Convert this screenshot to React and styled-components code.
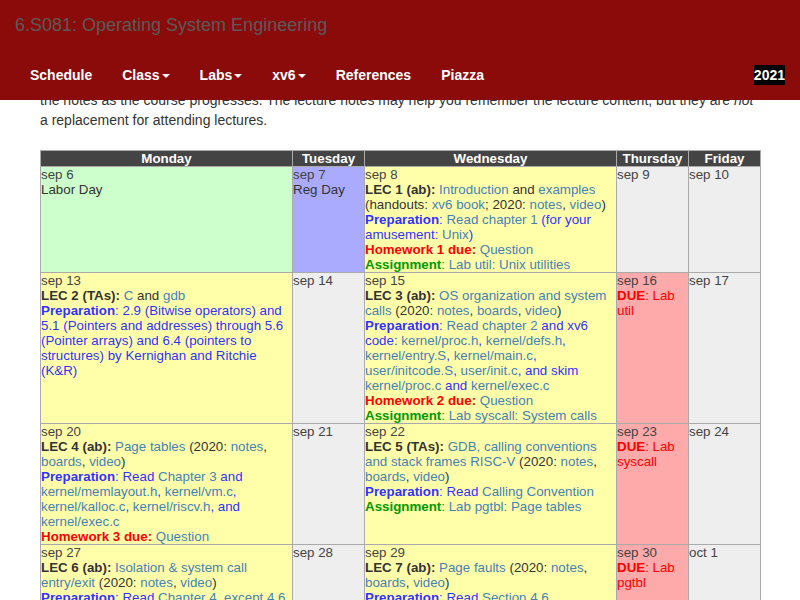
import React from 'react';
import styled, { createGlobalStyle } from 'styled-components';

const GlobalStyle = createGlobalStyle`
  html, body {
    margin: 0;
    padding: 0;
  }
  body {
    font-family: "Liberation Sans", Arial, Helvetica, sans-serif;
    font-size: 14px;
    line-height: 20px;
    color: #333;
    background: #fff;
  }
`;

const Navbar = styled.header`
  position: fixed;
  top: 0;
  left: 0;
  right: 0;
  z-index: 10;
  height: 100px;
  background: #8b0a0a;
`;

const Brand = styled.div`
  height: 50px;
  padding: 0 15px;
  font-size: 18px;
  line-height: 50px;
  color: #5a5a5a;
`;

const NavRow = styled.nav`
  display: flex;
  align-items: center;
  justify-content: space-between;
  height: 50px;
  padding: 0 15px;
`;

const NavList = styled.ul`
  display: flex;
  list-style: none;
  margin: 0;
  padding: 0;
`;

const NavItem = styled.li`
  padding: 15px;
  font-weight: bold;
  color: #fff;
  line-height: 20px;
`;

const Caret = styled.span`
  display: inline-block;
  width: 0;
  height: 0;
  margin-left: 2px;
  vertical-align: middle;
  border-top: 4px solid #fff;
  border-left: 4px solid transparent;
  border-right: 4px solid transparent;
`;

const Year = styled.span`
  background: #000;
  color: #fff;
  font-weight: bold;
  line-height: 20px;
`;

const Main = styled.main`
  padding: 90px 40px 40px;
`;

const Intro = styled.p`
  margin: 0 0 20px;
`;

const Schedule = styled.table`
  width: 720px;
  table-layout: fixed;
  border-collapse: collapse;
  font-size: 13.33px;
  line-height: 15px;
`;

const Col = styled.col`
  width: ${(p) => p.$w}px;
`;

const DayHead = styled.th`
  background: #444;
  color: #fff;
  font-weight: bold;
  border: 1px solid #aaa;
  padding: 0;
  text-align: center;
`;

const Day = styled.td`
  background: ${(p) => p.$bg || '#eee'};
  border: 1px solid #aaa;
  padding: 0;
  vertical-align: top;
  color: #333;
`;

const Date = styled.div`
  color: #444;
`;

const Line = styled.div``;

const Lec = styled.b`
  color: #333;
`;

const A = styled.a`
  color: #4682b4;
  text-decoration: none;
`;

const Prep = styled.div`
  color: #33f;
  b {
    color: #33f;
  }
`;

const Hw = styled.b`
  color: #f00;
`;

const Assign = styled.div`
  color: #090;
  b {
    color: #090;
  }
`;

const Due = styled.div`
  color: #f00;
`;

const colors = {
  holiday: '#ccffcc',
  reg: '#aaaaff',
  lec: '#ffffaa',
  none: '#eeeeee',
  due: '#ffaaaa',
};

const Empty = ({ date }) => (
  <Day $bg={colors.none}>
    <Date>{date}</Date>
  </Day>
);

const DueDay = ({ date, lab }) => (
  <Day $bg={colors.due}>
    <Date>{date}</Date>
    <Due>
      <b>DUE</b>: Lab {lab}
    </Due>
  </Day>
);

const App = () => {
  return (
    <>
      <GlobalStyle />
      <Navbar>
        <Brand>6.S081: Operating System Engineering</Brand>
        <NavRow>
          <NavList>
            <NavItem>Schedule</NavItem>
            <NavItem>
              Class<Caret />
            </NavItem>
            <NavItem>
              Labs<Caret />
            </NavItem>
            <NavItem>
              xv6<Caret />
            </NavItem>
            <NavItem>References</NavItem>
            <NavItem>Piazza</NavItem>
          </NavList>
          <Year>2021</Year>
        </NavRow>
      </Navbar>
      <Main>
        <Intro>
          the notes as the course progresses. The lecture notes may help you remember the
          lecture content, but they are <i>not</i> a replacement for attending lectures.
        </Intro>
        <Schedule>
          <colgroup>
            <Col $w={252} />
            <Col $w={72} />
            <Col $w={252} />
            <Col $w={72} />
            <Col $w={72} />
          </colgroup>
          <thead>
            <tr>
              <DayHead>Monday</DayHead>
              <DayHead>Tuesday</DayHead>
              <DayHead>Wednesday</DayHead>
              <DayHead>Thursday</DayHead>
              <DayHead>Friday</DayHead>
            </tr>
          </thead>
          <tbody>
            <tr>
              <Day $bg={colors.holiday}>
                <Date>sep 6</Date>
                <Line>Labor Day</Line>
              </Day>
              <Day $bg={colors.reg}>
                <Date>sep 7</Date>
                <Line>Reg Day</Line>
              </Day>
              <Day $bg={colors.lec}>
                <Date>sep 8</Date>
                <Line>
                  <Lec>LEC 1 (ab):</Lec> <A>Introduction</A> and <A>examples</A> (handouts:{' '}
                  <A>xv6 book</A>; 2020: <A>notes</A>, <A>video</A>)
                </Line>
                <Prep>
                  <b>Preparation</b>: <A>Read chapter 1</A> (for your amusement: <A>Unix</A>)
                </Prep>
                <Line>
                  <Hw>Homework 1 due:</Hw> <A>Question</A>
                </Line>
                <Assign>
                  <b>Assignment</b>: <A>Lab util: Unix utilities</A>
                </Assign>
              </Day>
              <Empty date="sep 9" />
              <Empty date="sep 10" />
            </tr>
            <tr>
              <Day $bg={colors.lec}>
                <Date>sep 13</Date>
                <Line>
                  <Lec>LEC 2 (TAs):</Lec> <A>C</A> and <A>gdb</A>
                </Line>
                <Prep>
                  <b>Preparation</b>: 2.9 (Bitwise operators) and 5.1 (Pointers and addresses)
                  through 5.6 (Pointer arrays) and 6.4 (pointers to structures) by Kernighan and
                  Ritchie (K&amp;R)
                </Prep>
              </Day>
              <Empty date="sep 14" />
              <Day $bg={colors.lec}>
                <Date>sep 15</Date>
                <Line>
                  <Lec>LEC 3 (ab):</Lec> <A>OS organization and system calls</A> (2020:{' '}
                  <A>notes</A>, <A>boards</A>, <A>video</A>)
                </Line>
                <Prep>
                  <b>Preparation</b>: <A>Read chapter 2</A> and xv6 code: <A>kernel/proc.h</A>,{' '}
                  <A>kernel/defs.h</A>, <A>kernel/entry.S</A>, <A>kernel/main.c</A>,{' '}
                  <A>user/initcode.S</A>, <A>user/init.c</A>, and skim <A>kernel/proc.c</A> and{' '}
                  <A>kernel/exec.c</A>
                </Prep>
                <Line>
                  <Hw>Homework 2 due:</Hw> <A>Question</A>
                </Line>
                <Assign>
                  <b>Assignment</b>: <A>Lab syscall: System calls</A>
                </Assign>
              </Day>
              <DueDay date="sep 16" lab="util" />
              <Empty date="sep 17" />
            </tr>
            <tr>
              <Day $bg={colors.lec}>
                <Date>sep 20</Date>
                <Line>
                  <Lec>LEC 4 (ab):</Lec> <A>Page tables</A> (2020: <A>notes</A>, <A>boards</A>,{' '}
                  <A>video</A>)
                </Line>
                <Prep>
                  <b>Preparation</b>: Read <A>Chapter 3</A> and <A>kernel/memlayout.h</A>,{' '}
                  <A>kernel/vm.c</A>, <A>kernel/kalloc.c</A>, <A>kernel/riscv.h</A>, and{' '}
                  <A>kernel/exec.c</A>
                </Prep>
                <Line>
                  <Hw>Homework 3 due:</Hw> <A>Question</A>
                </Line>
              </Day>
              <Empty date="sep 21" />
              <Day $bg={colors.lec}>
                <Date>sep 22</Date>
                <Line>
                  <Lec>LEC 5 (TAs):</Lec> <A>GDB, calling conventions and stack frames RISC-V</A>{' '}
                  (2020: <A>notes</A>, <A>boards</A>, <A>video</A>)
                </Line>
                <Prep>
                  <b>Preparation</b>: Read <A>Calling Convention</A>
                </Prep>
                <Assign>
                  <b>Assignment</b>: <A>Lab pgtbl: Page tables</A>
                </Assign>
              </Day>
              <DueDay date="sep 23" lab="syscall" />
              <Empty date="sep 24" />
            </tr>
            <tr>
              <Day $bg={colors.lec}>
                <Date>sep 27</Date>
                <Line>
                  <Lec>LEC 6 (ab):</Lec> <A>Isolation &amp; system call entry/exit</A> (2020:{' '}
                  <A>notes</A>, <A>video</A>)
                </Line>
                <Prep>
                  <b>Preparation</b>: Read <A>Chapter 4, except 4.6</A> and <A>kernel/riscv.h</A>,{' '}
                  <A>kernel/trampoline.S</A>, and <A>kernel/trap.c</A>
                </Prep>
              </Day>
              <Empty date="sep 28" />
              <Day $bg={colors.lec}>
                <Date>sep 29</Date>
                <Line>
                  <Lec>LEC 7 (ab):</Lec> <A>Page faults</A> (2020: <A>notes</A>, <A>boards</A>,{' '}
                  <A>video</A>)
                </Line>
                <Prep>
                  <b>Preparation</b>: Read <A>Section 4.6</A>
                </Prep>
                <Assign>
                  <b>Assignment</b>: <A>Lab traps: Trap</A>
                </Assign>
              </Day>
              <DueDay date="sep 30" lab="pgtbl" />
              <Empty date="oct 1" />
            </tr>
          </tbody>
        </Schedule>
      </Main>
    </>
  );
};

export default App;
